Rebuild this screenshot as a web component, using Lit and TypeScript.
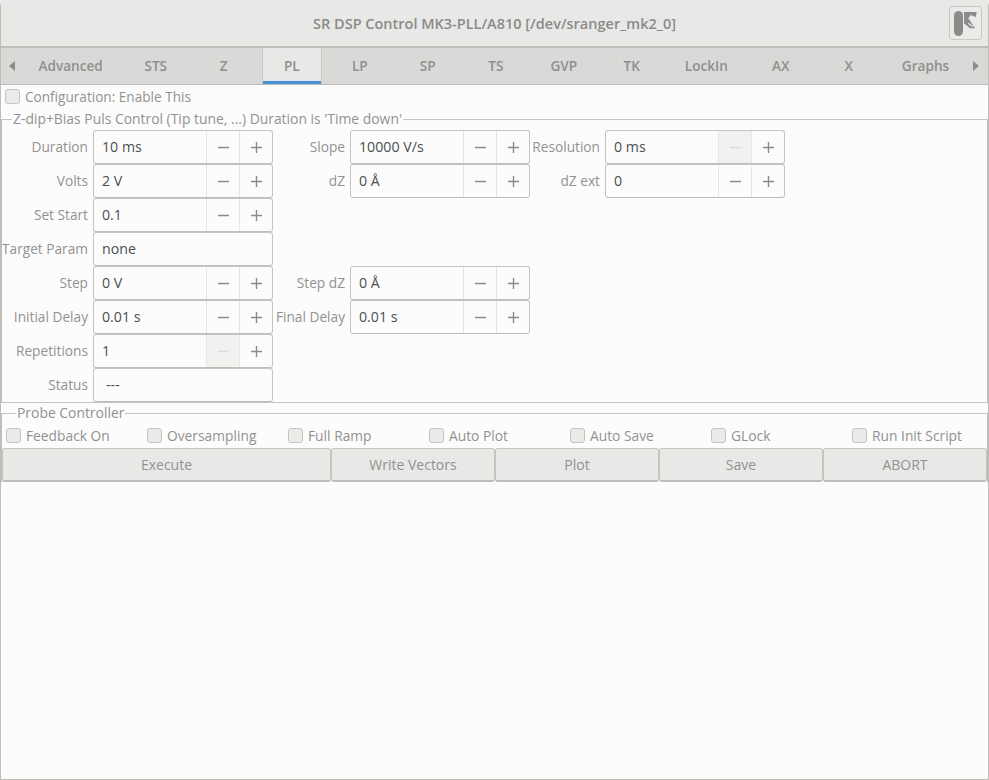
import { LitElement, html, css, nothing } from 'lit';
import { customElement } from 'lit/decorators.js';

type Cell = { label: string; value: string; spin?: boolean; minusOff?: boolean; pad?: boolean } | null;

const TABS = ['Advanced', 'STS', 'Z', 'PL', 'LP', 'SP', 'TS', 'GVP', 'TK', 'LockIn', 'AX', 'X', 'Graphs'];

const ROWS: Cell[][] = [
  [
    { label: 'Duration', value: '10 ms', spin: true },
    { label: 'Slope', value: '10000 V/s', spin: true },
    { label: 'Resolution', value: '0 ms', spin: true, minusOff: true },
  ],
  [
    { label: 'Volts', value: '2 V', spin: true },
    { label: 'dZ', value: '0 Å', spin: true },
    { label: 'dZ ext', value: '0', spin: true },
  ],
  [{ label: 'Set Start', value: '0.1', spin: true }, null, null],
  [{ label: 'Target Param', value: 'none' }, null, null],
  [
    { label: 'Step', value: '0 V', spin: true },
    { label: 'Step dZ', value: '0 Å', spin: true },
    null,
  ],
  [
    { label: 'Initial Delay', value: '0.01 s', spin: true },
    { label: 'Final Delay', value: '0.01 s', spin: true },
    null,
  ],
  [{ label: 'Repetitions', value: '1', spin: true, minusOff: true }, null, null],
  [{ label: 'Status', value: '---', pad: true }, null, null],
];

const CHECKS = ['Feedback On', 'Oversampling', 'Full Ramp', 'Auto Plot', 'Auto Save', 'GLock', 'Run Init Script'];
const BUTTONS = ['Execute', 'Write Vectors', 'Plot', 'Save', 'ABORT'];

@customElement('app-root')
export class AppRoot extends LitElement {
  static styles = css`
    :host {
      display: block;
      width: 989px;
      height: 780px;
      background: #f4f4f3;
      font-family: 'Open Sans', 'Noto Sans', sans-serif;
      font-size: 13.8px;
      color: #929291;
    }
    .window {
      box-sizing: border-box;
      height: 780px;
      display: flex;
      flex-direction: column;
      background: #fcfcfc;
      border: 1px solid #bdbdb9;
      border-top: none;
      border-radius: 6px 6px 0 0;
      overflow: hidden;
    }
    .titlebar {
      flex: none;
      height: 48px;
      box-sizing: border-box;
      position: relative;
      display: flex;
      align-items: center;
      justify-content: center;
      background: #e8e8e7;
      border-bottom: 2px solid #bdbdb9;
      font-size: 14.5px;
      font-weight: 600;
      color: #8b8b8a;
    }
    .app-btn {
      position: absolute;
      right: 6px;
      top: 6px;
      width: 33px;
      height: 34px;
      box-sizing: border-box;
      border: 1px solid #c9c9c6;
      border-radius: 3px;
      background: #eaeae9;
    }
    .app-btn svg { display: block; }
    .tabbar {
      flex: none;
      height: 37px;
      box-sizing: border-box;
      display: flex;
      background: #d9d9d7;
      border-bottom: 1px solid #bdbdb9;
    }
    .arrow {
      flex: none;
      width: 18.5px;
      display: flex;
      align-items: center;
      justify-content: center;
      padding-left: 4px;
      box-sizing: border-box;
    }
    .arrow.right { padding-left: 0; padding-right: 6px; margin-left: auto; width: 21px; }
    .tab {
      flex: none;
      box-sizing: border-box;
      min-width: 58px;
      padding: 0 14px 2px;
      margin: 0 5px;
      display: flex;
      align-items: center;
      justify-content: center;
      font-size: 13.6px;
      font-weight: 600;
      color: #8f8f8e;
      white-space: nowrap;
    }
    .tab.active {
      min-width: 60px;
      margin: 0 4px;
      background: #e8e8e7;
      border-left: 1px solid #c9c9c6;
      border-right: 1px solid #c9c9c6;
      box-shadow: inset 0 -3px 0 #4a90d9;
    }
    .config {
      flex: none;
      height: 23px;
      box-sizing: border-box;
      display: flex;
      align-items: center;
      gap: 5px;
      padding: 0 0 1px 4px;
      font-size: 13.6px;
    }
    .config .box { margin-top: 1px; }
    .box {
      flex: none;
      width: 15px;
      height: 15px;
      box-sizing: border-box;
      border: 1px solid #c4c4c1;
      border-radius: 3px;
      background: #eaeae9;
    }
    .frame {
      position: relative;
      flex: none;
      margin-top: 11px;
      border-top: 1px solid #c4c4c1;
      border-bottom: 1px solid #c4c4c1;
      border-left: 1px solid #bdbdb9;
      border-right: 1px solid #bdbdb9;
      padding-top: 10px;
    }
    .frame.probe {
      margin-top: 10px;
      border-bottom: none;
      padding-top: 0;
    }
    .legend {
      position: absolute;
      left: 10px;
      top: -11px;
      background: #fcfcfc;
      padding: 0 1px;
      line-height: 19px;
      font-size: 13.9px;
      white-space: nowrap;
    }
    .probe .legend { left: 14px; }
    .grid {
      display: grid;
      grid-template-columns: 91px 180px 77px 180px 75px 180px;
      grid-auto-rows: 34px;
    }
    .label {
      display: flex;
      align-items: center;
      justify-content: flex-end;
      padding: 0 5px 2px 0;
      font-size: 13.7px;
      white-space: nowrap;
    }
    .entry {
      display: flex;
      box-sizing: border-box;
      height: 34px;
      border: 1px solid #c4c4c1;
      border-bottom-color: #bdbdb9;
      border-radius: 3px;
      background: #fcfcfc;
      color: #4a4f50;
      overflow: hidden;
    }
    .value {
      flex: 1;
      display: flex;
      align-items: center;
      padding: 0 0 2px 8px;
      font-size: 14.2px;
    }
    .value.pad { padding-left: 12px; }
    .step {
      flex: none;
      box-sizing: border-box;
      width: 33px;
      display: flex;
      align-items: center;
      justify-content: center;
      border-left: 1px solid #e6e6e4;
      color: #8a8a89;
    }
    .step.off { background: #f1f1f0; color: #dcdcda; }
    .checks {
      display: grid;
      grid-template-columns: repeat(7, 141px);
      height: 34px;
      padding-left: 4px;
      box-sizing: border-box;
      align-items: end;
    }
    .check {
      display: flex;
      align-items: center;
      gap: 5px;
      white-space: nowrap;
      height: 25px;
    }
    .buttons {
      display: grid;
      grid-template-columns: 329px 164px 164px 164px 164px;
      height: 34px;
    }
    .btn {
      display: flex;
      align-items: center;
      justify-content: center;
      box-sizing: border-box;
      background: #e8e8e7;
      border: 1px solid #c4c4c1;
      border-bottom: 2px solid #bdbdb9;
      border-radius: 3px;
      font-size: 14px;
    }
    .rest { flex: 1; }
  `;

  renderCell(c: Cell) {
    if (!c) return html`<div></div><div></div>`;
    return html`
      <div class="label">${c.label}</div>
      <div class="entry">
        <div class="value ${c.pad ? 'pad' : ''}">${c.value}</div>
        ${c.spin
          ? html`
              <div class="step ${c.minusOff ? 'off' : ''}">${this.glyph('M0 4.8h11v1.4H0z')}</div>
              <div class="step">${this.glyph('M0 4.8h4.8V0h1.4v4.8H11v1.4H6.2V11H4.8V6.2H0z')}</div>
            `
          : nothing}
      </div>
    `;
  }

  glyph(d: string) {
    return html`<svg width="11" height="11" viewBox="0 0 11 11"><path d=${d} fill="currentColor" /></svg>`;
  }

  render() {
    return html`
      <div class="window">
        <div class="titlebar">
          SR DSP Control MK3-PLL/A810 [/dev/sranger_mk2_0]
          <div class="app-btn">
            <svg width="31" height="32" viewBox="0 0 31 32">
              <rect x="4" y="4" width="9" height="25" rx="4.5" fill="#8b8b8a" />
              <path d="M14 5h12.7l-1 5.3L21 8l-2.7 3.3L25 21.3h-5L14 16.3z" fill="#8b8b8a" />
              <path d="M18.3 16.3l4.4 3.4" stroke="#eaeae9" stroke-width="1.2" fill="none" />
            </svg>
          </div>
        </div>
        <div class="tabbar">
          <div class="arrow">
            <svg width="6" height="10" viewBox="0 0 6 10"><path d="M6 0v10L0 5z" fill="#8b8b8a" /></svg>
          </div>
          ${TABS.map((t) => html`<div class="tab ${t === 'PL' ? 'active' : ''}">${t}</div>`)}
          <div class="arrow right">
            <svg width="6" height="10" viewBox="0 0 6 10"><path d="M0 0v10l6-5z" fill="#8b8b8a" /></svg>
          </div>
        </div>
        <div class="config"><span class="box"></span>Configuration: Enable This</div>
        <div class="frame">
          <div class="legend">Z-dip+Bias Puls Control (Tip tune, ...) Duration is 'Time down'</div>
          <div class="grid">${ROWS.map((r) => r.map((c) => this.renderCell(c)))}</div>
        </div>
        <div class="frame probe">
          <div class="legend">Probe Controller</div>
          <div class="checks">
            ${CHECKS.map((c) => html`<div class="check"><span class="box"></span>${c}</div>`)}
          </div>
          <div class="buttons">${BUTTONS.map((b) => html`<div class="btn">${b}</div>`)}</div>
        </div>
        <div class="rest"></div>
      </div>
    `;
  }
}
